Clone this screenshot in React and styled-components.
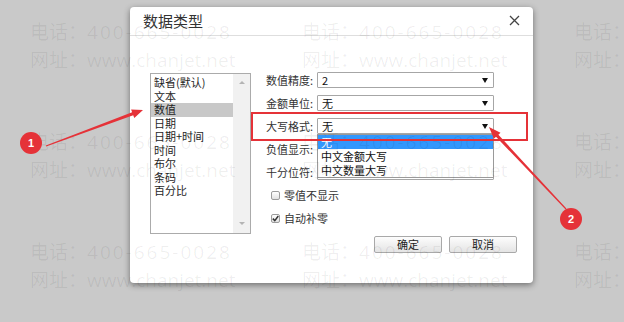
import React from "react";
import styled, { createGlobalStyle } from "styled-components";

const GlobalStyle = createGlobalStyle`
  html, body {
    margin: 0;
    padding: 0;
    background: #c9c9c9;
  }
  * {
    box-sizing: border-box;
  }
`;

const CJK = `"Noto Sans CJK SC", "Liberation Sans", sans-serif`;

const Stage = styled.div`
  position: relative;
  width: 624px;
  height: 322px;
  overflow: hidden;
  background: #c9c9c9;
  padding: 7px 0 0 130px;
  font-family: ${CJK};
`;

const Dialog = styled.div`
  width: 403px;
  height: 276px;
  background: #fff;
  border-radius: 4px;
  box-shadow: 0 2px 6px rgba(0, 0, 0, 0.45);
  display: flex;
  flex-direction: column;
`;

const Header = styled.div`
  height: 29px;
  display: flex;
  align-items: center;
  justify-content: space-between;
  padding: 0 13px 0 13px;
  border-bottom: 1px solid #dedede;
`;

const Title = styled.h2`
  margin: 0;
  font-size: 15px;
  font-weight: 400;
  line-height: 20px;
  color: #333;
`;

const Close = styled.button`
  border: 0;
  background: none;
  padding: 0;
  width: 12px;
  height: 12px;
  display: flex;
  align-items: center;
  justify-content: center;
  margin-top: -2px;
`;

const Body = styled.div`
  display: flex;
  gap: 15px;
  padding: 36px 0 0 20px;
`;

const ListBox = styled.div`
  width: 101px;
  height: 161px;
  margin-top: 1px;
  border: 1px solid #ababab;
  display: flex;
`;

const Items = styled.ul`
  flex: 1;
  list-style: none;
  margin: 0;
  padding: 2px 0 0 0;
`;

const Item = styled.li`
  height: 13.5px;
  line-height: 13.5px;
  font-size: 11px;
  padding-left: 3px;
  color: #1e1e1e;
  white-space: nowrap;
  background: ${(p) => (p.$selected ? "#c8c8c8" : "transparent")};
`;

const ScrollBar = styled.div`
  width: 17px;
  background: #f1f1f1;
  display: flex;
  flex-direction: column;
  justify-content: space-between;
  align-items: center;
  padding: 7px 0 8px;
`;

const ScrollArrow = styled.span`
  width: 0;
  height: 0;
  border-left: 3px solid transparent;
  border-right: 3px solid transparent;
  ${(p) =>
    p.$up
      ? "border-bottom: 3px solid #b4b4b4;"
      : "border-top: 3px solid #b4b4b4;"}
`;

const FormCol = styled.div`
  width: 251px;
  display: flex;
  flex-direction: column;
  gap: 7px;
`;

const FieldRow = styled.div`
  display: flex;
  align-items: center;
  height: 16px;
`;

const Label = styled.span`
  width: 51px;
  font-size: 11px;
  line-height: 16px;
  color: #333;
  white-space: nowrap;
`;

const SelectWrap = styled.div`
  position: relative;
`;

const SelectBox = styled.div`
  width: 177px;
  height: 16px;
  border: 1px solid #a6a6a6;
  border-radius: 1px;
  background: #fff;
  display: flex;
  align-items: center;
  justify-content: space-between;
  padding: 0 5px 0 4px;
  font-size: 11px;
  line-height: 14px;
  color: #111;
`;

const Popup = styled.ul`
  position: absolute;
  top: 16px;
  left: 0;
  width: 177px;
  margin: 0;
  padding: 0;
  list-style: none;
  background: #fff;
  border: 1px solid #9a9a9a;
  z-index: 2;
`;

const Option = styled.li`
  height: 14px;
  line-height: 14px;
  padding-left: 3px;
  font-size: 11px;
  color: ${(p) => (p.$active ? "#fff" : "#111")};
  background: ${(p) => (p.$active ? "#3297fd" : "#fff")};
`;

const CheckRow = styled.label`
  display: flex;
  align-items: center;
  gap: 4px;
  height: 16px;
  padding-left: 5px;
  font-size: 11px;
  color: #333;
`;

const Box = styled.span`
  width: 9px;
  height: 9px;
  border: 1px solid #9c9c9c;
  border-radius: 2px;
  background: linear-gradient(#ffffff, #e2e2e2);
  display: flex;
  align-items: center;
  justify-content: center;
`;

const Buttons = styled.div`
  display: flex;
  justify-content: flex-end;
  gap: 7px;
  margin-top: 3px;
`;

const Button = styled.button`
  width: 68px;
  height: 17px;
  padding: 0;
  border: 1px solid #a9a9a9;
  border-radius: 2px;
  background: linear-gradient(#fdfdfd, #e4e4e4);
  font-family: ${CJK};
  font-size: 11px;
  line-height: 15px;
  color: #222;
`;

const Watermark = styled.div`
  position: absolute;
  inset: 0;
  pointer-events: none;
  display: grid;
  grid-template-columns: repeat(3, 272px);
  grid-auto-rows: 110px;
  padding: 18px 0 0 30px;
  z-index: 3;
`;

const Mark = styled.div`
  font-family: "Open Sans", "Noto Sans CJK SC", sans-serif;
  font-size: 19px;
  line-height: 28px;
  color: rgba(0, 0, 0, 0.065);
  white-space: nowrap;
`;

const Phone = styled.span`
  letter-spacing: 2px;
`;

const Annotations = styled.svg`
  position: absolute;
  inset: 0;
  pointer-events: none;
  z-index: 4;
`;

const RED = "#e53238";

function arrowPoints(x1, y1, x2, y2, headLen, headW, tailW, shaftW) {
  const dx = x2 - x1;
  const dy = y2 - y1;
  const len = Math.hypot(dx, dy);
  const ux = dx / len;
  const uy = dy / len;
  const nx = -uy;
  const ny = ux;
  const bx = x2 - ux * headLen;
  const by = y2 - uy * headLen;
  const pts = [
    [x1 + nx * tailW, y1 + ny * tailW],
    [bx + nx * shaftW, by + ny * shaftW],
    [bx + nx * headW, by + ny * headW],
    [x2, y2],
    [bx - nx * headW, by - ny * headW],
    [bx - nx * shaftW, by - ny * shaftW],
    [x1 - nx * tailW, y1 - ny * tailW],
  ];
  return pts.map((p) => p.map((v) => v.toFixed(1)).join(",")).join(" ");
}

function Caret() {
  return (
    <svg width="6" height="5" viewBox="0 0 6 5">
      <path d="M0 0 H6 L3 5 Z" fill="#111" />
    </svg>
  );
}

function Select({ value, children }) {
  return (
    <SelectWrap>
      <SelectBox>
        <span>{value}</span>
        <Caret />
      </SelectBox>
      {children}
    </SelectWrap>
  );
}

const types = ["缺省(默认)", "文本", "数值", "日期", "日期+时间", "时间", "布尔", "条码", "百分比"];

export default function App() {
  return (
    <>
      <GlobalStyle />
      <Stage>
        <Dialog>
          <Header>
            <Title>数据类型</Title>
            <Close aria-label="关闭">
              <svg width="11" height="11" viewBox="0 0 11 11">
                <path d="M1 1 L10 10 M10 1 L1 10" stroke="#444" strokeWidth="1.3" />
              </svg>
            </Close>
          </Header>
          <Body>
            <ListBox>
              <Items>
                {types.map((t) => (
                  <Item key={t} $selected={t === "数值"}>
                    {t}
                  </Item>
                ))}
              </Items>
              <ScrollBar>
                <ScrollArrow $up />
                <ScrollArrow />
              </ScrollBar>
            </ListBox>
            <FormCol>
              <FieldRow>
                <Label>数值精度:</Label>
                <Select value="2" />
              </FieldRow>
              <FieldRow>
                <Label>金额单位:</Label>
                <Select value="无" />
              </FieldRow>
              <FieldRow>
                <Label>大写格式:</Label>
                <Select value="无">
                  <Popup>
                    <Option $active>无</Option>
                    <Option>中文金额大写</Option>
                    <Option>中文数量大写</Option>
                  </Popup>
                </Select>
              </FieldRow>
              <FieldRow>
                <Label>负值显示:</Label>
                <Select value="" />
              </FieldRow>
              <FieldRow>
                <Label>千分位符:</Label>
                <Select value="" />
              </FieldRow>
              <CheckRow>
                <Box />
                零值不显示
              </CheckRow>
              <CheckRow>
                <Box>
                  <svg width="7" height="7" viewBox="0 0 7 7">
                    <path d="M0.8 3.6 L2.8 5.6 L6.3 1" stroke="#333" strokeWidth="1.5" fill="none" />
                  </svg>
                </Box>
                自动补零
              </CheckRow>
              <Buttons>
                <Button>确定</Button>
                <Button>取消</Button>
              </Buttons>
            </FormCol>
          </Body>
        </Dialog>

        <Watermark>
          {Array.from({ length: 9 }).map((_, i) => (
            <Mark key={i}>
              <div>
                电话：<Phone>400-665-0028</Phone>
              </div>
              <div>网址：www.chanjet.net</div>
            </Mark>
          ))}
        </Watermark>

        <Annotations width="624" height="322" viewBox="0 0 624 322">
          <rect x="252" y="113" width="275" height="27" fill="none" stroke={RED} strokeWidth="2" />
          <polygon points={arrowPoints(46, 146, 143, 110, 11, 4.5, 0.5, 1.6)} fill={RED} />
          <polygon points={arrowPoints(566, 209, 489, 127, 12, 4.5, 0.6, 1.6)} fill={RED} />
          <circle cx="31" cy="143" r="11" fill={RED} />
          <text x="31" y="147" textAnchor="middle" fontSize="11" fontWeight="700" fill="#fff" fontFamily="Liberation Sans, sans-serif">
            1
          </text>
          <circle cx="571" cy="219" r="11" fill={RED} />
          <text x="571" y="223" textAnchor="middle" fontSize="11" fontWeight="700" fill="#fff" fontFamily="Liberation Sans, sans-serif">
            2
          </text>
        </Annotations>
      </Stage>
    </>
  );
}
